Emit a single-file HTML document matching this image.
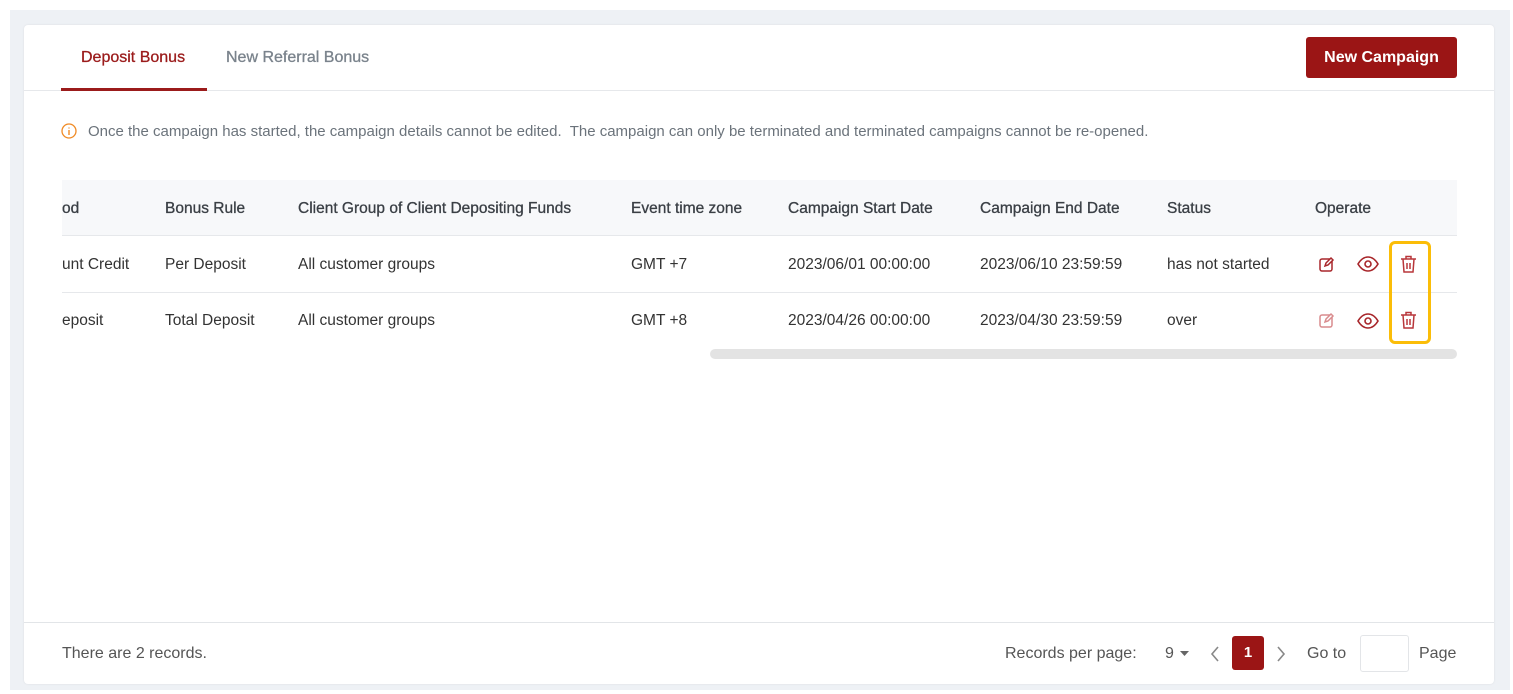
<!DOCTYPE html><html><head><style>
*{margin:0;padding:0;box-sizing:border-box}
body{width:1513px;height:694px;background:#fff;font-family:"Liberation Sans",sans-serif;position:relative;overflow:hidden;color:#333}
.bg{position:absolute;left:10px;top:10px;width:1500px;height:680px;background:#eef1f5}
.card{position:absolute;left:24px;top:25px;width:1470px;height:659px;background:#fff;border-radius:4px;box-shadow:0 0 2px rgba(0,0,0,.08)}
.a{position:absolute;white-space:nowrap}
.t{font-size:15.5px}
.h{font-size:15.5px;color:#3a3f45;-webkit-text-stroke:0.3px #3a3f45}
</style></head><body>
<div class="bg"></div><div class="card"></div>
<div class="a" style="left:81px;top:49px;font-size:16px;color:#9b1b1b;-webkit-text-stroke:0.3px #9b1b1b">Deposit Bonus</div>
<div class="a" style="left:226px;top:49px;font-size:16px;color:#7a838c;-webkit-text-stroke:0.3px #7a838c">New Referral Bonus</div>
<div class="a" style="left:24px;top:90px;width:1470px;height:1px;background:#e6e8eb"></div>
<div class="a" style="left:61px;top:88px;width:146px;height:3px;background:#9b1b1b"></div>
<div class="a" style="left:1306px;top:37px;width:151px;height:41px;background:#9b1515;border-radius:3px;color:#fff;font-size:16px;font-weight:bold;text-align:center;line-height:41px">New Campaign</div>
<svg class="a" style="left:61px;top:123px" width="16" height="16" viewBox="0 0 16 16"><circle cx="8" cy="8" r="7" fill="none" stroke="#f08a24" stroke-width="1.3"/><path d="M8 7v5M8 4.5v1" stroke="#f08a24" stroke-width="1.4"/></svg>
<div class="a" style="left:88px;top:123px;font-size:15px;color:#6b737b">Once the campaign has started, the campaign details cannot be edited.&nbsp; The campaign can only be terminated and terminated campaigns cannot be re-opened.</div>
<div class="a" style="left:62px;top:180px;width:1395px;height:56px;background:#f7f8fa;border-bottom:1px solid #e6e8eb"></div>
<div class="a" style="left:62px;top:292px;width:1395px;height:1px;background:#e6e8eb"></div>
<div class="a h" style="left:62px;top:200px">od</div>
<div class="a h" style="left:165px;top:200px">Bonus Rule</div>
<div class="a h" style="left:298px;top:200px">Client Group of Client Depositing Funds</div>
<div class="a h" style="left:631px;top:200px">Event time zone</div>
<div class="a h" style="left:788px;top:200px">Campaign Start Date</div>
<div class="a h" style="left:980px;top:200px">Campaign End Date</div>
<div class="a h" style="left:1167px;top:200px">Status</div>
<div class="a h" style="left:1315px;top:200px">Operate</div>
<div class="a t" style="left:62px;top:256px">unt Credit</div>
<div class="a t" style="left:165px;top:256px">Per Deposit</div>
<div class="a t" style="left:298px;top:256px">All customer groups</div>
<div class="a t" style="left:631px;top:256px">GMT +7</div>
<div class="a t" style="left:788px;top:256px">2023/06/01 00:00:00</div>
<div class="a t" style="left:980px;top:256px">2023/06/10 23:59:59</div>
<div class="a t" style="left:1167px;top:256px">has not started</div>
<div class="a t" style="left:62px;top:312px">eposit</div>
<div class="a t" style="left:165px;top:312px">Total Deposit</div>
<div class="a t" style="left:298px;top:312px">All customer groups</div>
<div class="a t" style="left:631px;top:312px">GMT +8</div>
<div class="a t" style="left:788px;top:312px">2023/04/26 00:00:00</div>
<div class="a t" style="left:980px;top:312px">2023/04/30 23:59:59</div>
<div class="a t" style="left:1167px;top:312px">over</div>
<svg class="a" style="left:1318px;top:256px" width="17" height="17" viewBox="0 0 17 17" fill="none" stroke="#a8272b" stroke-width="1.5"><rect x="2" y="3" width="12" height="12" rx="2"/><path d="M7 10l1-3 5-5 2 2-5 5z" fill="#fff"/></svg>
<svg class="a" style="left:1318px;top:312px" width="17" height="17" viewBox="0 0 17 17" fill="none" stroke="#d98c8e" stroke-width="1.5"><rect x="2" y="3" width="12" height="12" rx="2"/><path d="M7 10l1-3 5-5 2 2-5 5z" fill="#fff"/></svg>
<svg class="a" style="left:1357px;top:256px" width="22" height="16" viewBox="0 0 22 16" fill="none" stroke="#a8272b" stroke-width="1.6"><path d="M1 8C4 3 7 1 11 1s7 2 10 7c-3 5-6 7-10 7S4 13 1 8z"/><circle cx="11" cy="8" r="3"/></svg>
<svg class="a" style="left:1357px;top:313px" width="22" height="16" viewBox="0 0 22 16" fill="none" stroke="#a8272b" stroke-width="1.6"><path d="M1 8C4 3 7 1 11 1s7 2 10 7c-3 5-6 7-10 7S4 13 1 8z"/><circle cx="11" cy="8" r="3"/></svg>
<svg class="a" style="left:1400px;top:255px" width="17" height="19" viewBox="0 0 17 19" fill="none" stroke="#b8363a" stroke-width="1.5"><path d="M1 4h15M6 4V1.5h5V4M3 4l1 13h9l1-13M7 8v6M10 8v6"/></svg>
<svg class="a" style="left:1400px;top:311px" width="17" height="19" viewBox="0 0 17 19" fill="none" stroke="#b8363a" stroke-width="1.5"><path d="M1 4h15M6 4V1.5h5V4M3 4l1 13h9l1-13M7 8v6M10 8v6"/></svg>
<div class="a" style="left:1389px;top:241px;width:42px;height:103px;border:3px solid #fbbd08;border-radius:6px"></div>
<div class="a" style="left:710px;top:349px;width:747px;height:10px;background:#e3e3e3;border-radius:5px"></div>
<div class="a" style="left:24px;top:622px;width:1470px;height:1px;background:#e2e5e8"></div>
<div class="a" style="left:62px;top:645px;font-size:16px;color:#555">There are 2 records.</div>
<div class="a" style="left:1005px;top:645px;font-size:16px;color:#555">Records per page:</div>
<div class="a" style="left:1165px;top:645px;font-size:16px;color:#555">9</div>
<svg class="a" style="left:1180px;top:651px" width="9" height="5"><path d="M0 0h9L4.5 5z" fill="#666"/></svg>
<svg class="a" style="left:1210px;top:646px" width="10" height="16" fill="none" stroke="#888" stroke-width="1.6"><path d="M8 1L2 8l6 7"/></svg>
<div class="a" style="left:1232px;top:636px;width:32px;height:34px;background:#9b1515;border-radius:3px;color:#fff;font-size:15px;font-weight:bold;text-align:center;line-height:34px">1</div>
<svg class="a" style="left:1276px;top:646px" width="10" height="16" fill="none" stroke="#888" stroke-width="1.6"><path d="M2 1l6 7-6 7"/></svg>
<div class="a" style="left:1307px;top:645px;font-size:16px;color:#555">Go to</div>
<div class="a" style="left:1360px;top:635px;width:49px;height:37px;border:1px solid #e3e5e8;border-radius:3px"></div>
<div class="a" style="left:1419px;top:645px;font-size:16px;color:#555">Page</div>
</body></html>
